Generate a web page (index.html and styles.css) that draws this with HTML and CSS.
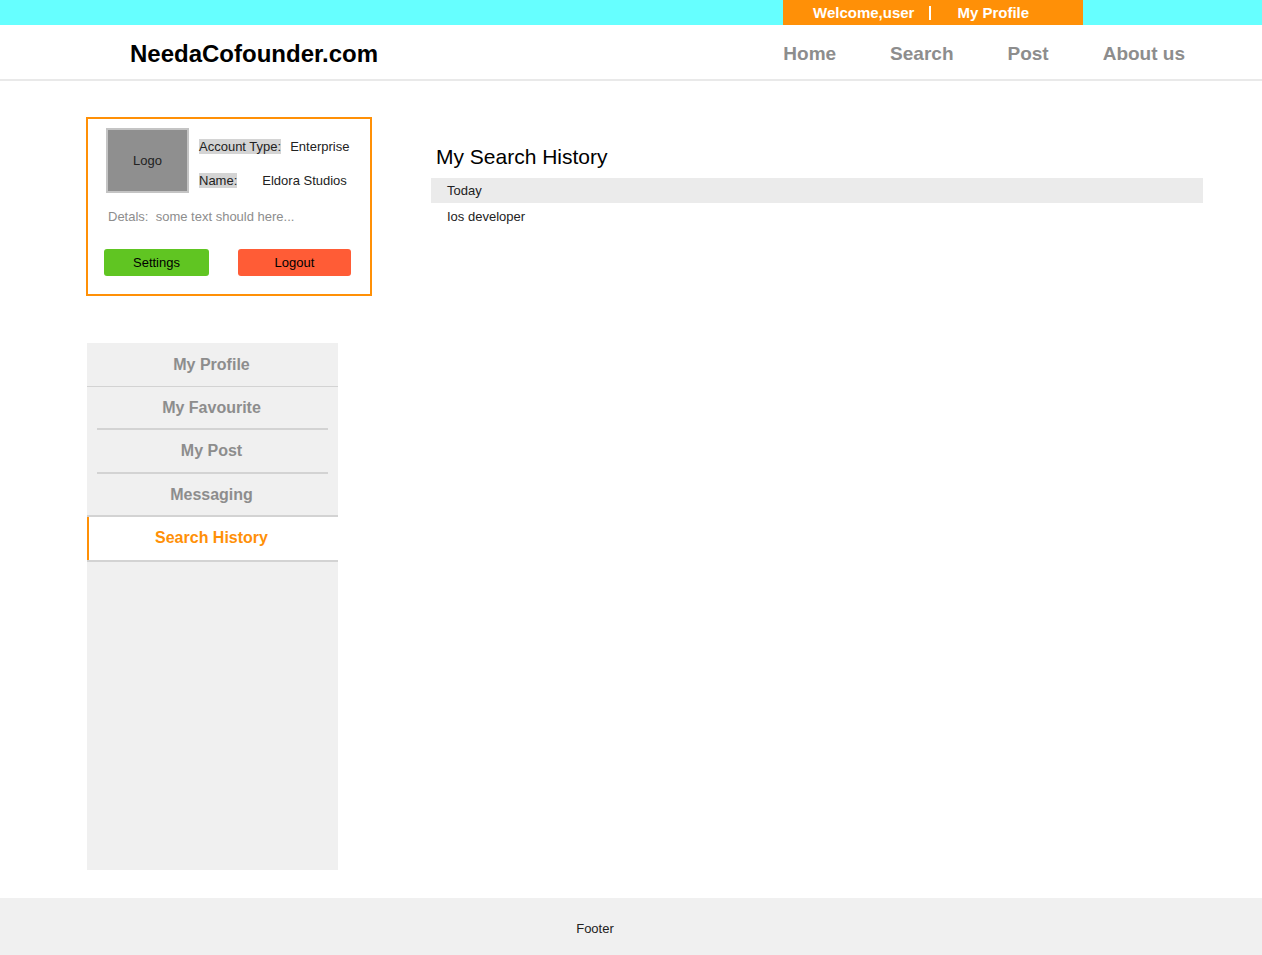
FILE: index.html
```html
<!DOCTYPE html>
<html lang="en">
<head>
<meta charset="utf-8">
<meta name="viewport" content="width=device-width, initial-scale=1">
<title>My Search History - NeedaCofounder.com</title>
<link rel="stylesheet" href="styles.css">
</head>
<body>
<div class="topbar">
  <div class="account-links">
    <span>Welcome,user</span>
    <span class="divider"></span>
    <a href="#profile">My Profile</a>
  </div>
</div>
<header class="header">
  <a class="brand" href="#home">NeedaCofounder.com</a>
  <nav class="main-nav" aria-label="Main">
    <a href="#home">Home</a>
    <a href="#search">Search</a>
    <a href="#post">Post</a>
    <a href="#about">About us</a>
  </nav>
</header>
<div class="page">
  <aside class="side">
    <section class="card" aria-label="Account">
      <div class="summary">
        <div class="logo">Logo</div>
        <dl class="facts">
          <div class="fact"><dt>Account Type:</dt><dd>Enterprise</dd></div>
          <div class="fact fact-name"><dt>Name:</dt><dd>Eldora Studios</dd></div>
        </dl>
      </div>
      <p class="details">Detals:  some text should here...</p>
      <div class="actions">
        <button class="btn btn-settings" type="button">Settings</button>
        <button class="btn btn-logout" type="button">Logout</button>
      </div>
    </section>
    <nav class="side-nav" aria-label="Account pages">
      <a class="item item-first" href="#profile">My Profile</a>
      <a class="item item-inset" href="#favourite">My Favourite</a>
      <a class="item item-inset item-post" href="#my-post">My Post</a>
      <a class="item" href="#messaging">Messaging</a>
      <a class="item item-active" href="#history" aria-current="page">Search History</a>
    </nav>
  </aside>
  <main class="content">
    <h1 class="title">My Search History</h1>
    <h2 class="day">Today</h2>
    <ul class="entries">
      <li>Ios developer</li>
    </ul>
  </main>
</div>
<footer class="footer">Footer</footer>
</body>
</html>
```
FILE: styles.css
```css
* { box-sizing: border-box; }

body {
  display: flex;
  flex-direction: column;
  min-height: 100vh;
  margin: 0;
  background: #fff;
  color: #222;
  font: 13px/15px "Liberation Sans", Arial, sans-serif;
}

a { color: inherit; text-decoration: none; }

.topbar {
  display: flex;
  justify-content: flex-end;
  padding-right: 179px;
  background: #66ffff;
}

.account-links {
  display: flex;
  align-items: center;
  width: 300px;
  height: 25px;
  padding-left: 30px;
  background: #ff9007;
  color: #fff;
  font-size: 15px;
  font-weight: bold;
}

.divider {
  width: 2px;
  height: 14px;
  margin: 0 26px 0 15px;
  background: #fff;
}

.header {
  display: flex;
  align-items: center;
  justify-content: space-between;
  height: 56px;
  padding: 4px 77px 0 130px;
  border-bottom: 2px solid #e9e9e9;
}

.brand {
  color: #000;
  font-size: 24px;
  font-weight: bold;
  line-height: 28px;
}

.main-nav {
  display: flex;
  gap: 54px;
  color: #8d8d8d;
  font-size: 19px;
  font-weight: bold;
  line-height: 22px;
}

.page {
  display: flex;
  flex: 1;
  gap: 59px;
  padding: 36px 59px 28px 86px;
}

.side {
  display: flex;
  flex-direction: column;
  flex: none;
  gap: 47px;
  width: 286px;
}

.card {
  padding: 9px 16px 18px;
  border: 2px solid #ff9007;
}

.summary {
  display: flex;
  gap: 10px;
  padding-left: 2px;
}

.logo {
  display: grid;
  place-items: center;
  width: 83px;
  height: 65px;
  border: 2px solid #c4c4c4;
  background: #8f8f8f;
}

.facts {
  display: flex;
  flex-direction: column;
  gap: 19px;
  margin: 11px 0 0;
}

.fact { display: flex; gap: 9px; white-space: nowrap; }
.fact-name { gap: 25px; }
.fact dt { background: #d4d4d4; }
.fact dd { margin: 0; }

.details {
  margin: 16px 4px 25px;
  color: #8d8d8d;
  white-space: pre-wrap;
}

.actions { display: flex; gap: 29px; }

.btn {
  height: 27px;
  padding: 0;
  border: 0;
  border-radius: 3px;
  color: #000;
  font: inherit;
}

.btn-settings { width: 105px; background: #60c522; }
.btn-logout { width: 113px; background: #ff5c36; }

.side-nav {
  display: flex;
  flex-direction: column;
  flex: 1;
  width: 251px;
  min-height: 400px;
  margin-left: 1px;
  background: #f0f0f0;
}

.item {
  padding: 12px 2px 11px 0;
  border-bottom: 2px solid #d3d3d3;
  color: #8d8d8d;
  font-size: 16px;
  font-weight: bold;
  line-height: 18px;
  text-align: center;
}

.item-first { padding: 13px 2px 12px 0; border-bottom-width: 1px; }
.item-inset { margin: 0 10px; }
.item-post { padding-bottom: 12px; }

.item-active {
  padding-bottom: 13px;
  background: #fff;
  box-shadow: inset 2px 0 #ff9007;
  color: #ff9007;
}

.content { flex: 1; padding-top: 28px; }

.title {
  margin: 0 0 9px 5px;
  color: #000;
  font-size: 21px;
  font-weight: normal;
  line-height: 24px;
}

.day {
  margin: 0;
  padding: 5px 16px;
  background: #ebebeb;
  font-size: 13px;
  font-weight: normal;
}

.entries {
  margin: 0;
  padding: 6px 16px;
  list-style: none;
}

.footer {
  padding: 23px 72px 19px 0;
  background: #f0f0f0;
  text-align: center;
}
```
